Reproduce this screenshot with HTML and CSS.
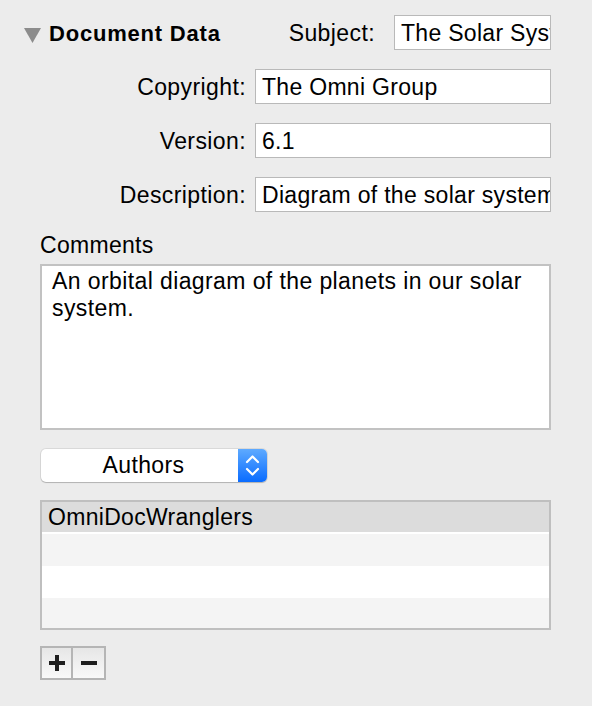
FILE: index.html
```html
<!DOCTYPE html>
<html>
<head>
<meta charset="utf-8">
<link rel="stylesheet" href="styles.css">
</head>
<body>
<div class="panel">
  <div class="head">
    <svg class="disclosure" width="17" height="16" viewBox="0 0 17 16"><polygon points="0,0 17,0 8.5,15" fill="#8c8c8c"/></svg>
    <span class="title">Document Data</span>
    <div class="subject">
      <span class="label">Subject:</span>
      <div class="input small">The Solar System</div>
    </div>
  </div>
  <div class="field">
    <span class="label">Copyright:</span>
    <div class="input">The Omni Group</div>
  </div>
  <div class="field">
    <span class="label">Version:</span>
    <div class="input">6.1</div>
  </div>
  <div class="field">
    <span class="label">Description:</span>
    <div class="input">Diagram of the solar system</div>
  </div>
  <div class="comments-label">Comments</div>
  <div class="textarea">An orbital diagram of the planets in our solar system.</div>
  <div class="popup">
    <span class="popup-text">Authors</span>
    <span class="popup-arrows">
      <svg width="29" height="33" viewBox="0 0 29 33"><path d="M9 13 L14.5 7.5 L20 13 M9 20 L14.5 25.5 L20 20" fill="none" stroke="#fff" stroke-width="2.2" stroke-linecap="round" stroke-linejoin="round"/></svg>
    </span>
  </div>
  <div class="table">
    <div class="row selected">OmniDocWranglers</div>
    <div class="row alt"></div>
    <div class="row"></div>
    <div class="row alt last"></div>
  </div>
  <div class="buttons">
    <div class="btn">
      <svg width="16" height="16" viewBox="0 0 16 16"><path d="M0 8 H16 M8 0 V16" stroke="#1e1e1e" stroke-width="4"/></svg>
    </div>
    <div class="btn">
      <svg width="16" height="16" viewBox="0 0 16 16"><path d="M0 8 H16" stroke="#1e1e1e" stroke-width="4"/></svg>
    </div>
  </div>
</div>
</body>
</html>
```
FILE: styles.css
```css
html, body {
  margin: 0;
  padding: 0;
  background: #ececec;
}
body {
  font-family: "Liberation Sans", Arial, sans-serif;
  font-size: 23px;
  color: #000;
  width: 592px;
  height: 706px;
  overflow: hidden;
}
.panel {
  padding: 15px 41px 0 40px;
}
.head {
  display: flex;
  align-items: baseline;
  height: 35px;
  margin-left: -16px;
}
.disclosure {
  display: block;
  align-self: flex-start;
  margin-right: 8px;
  margin-top: 13px;
}
.title {
  font-weight: bold;
  font-size: 22px;
  letter-spacing: 0.8px;
}
.subject {
  margin-left: auto;
  display: flex;
  align-items: baseline;
  gap: 19px;
}
.label {
  letter-spacing: 0.4px;
}
.input {
  box-sizing: border-box;
  width: 296px;
  height: 35px;
  background: #fff;
  border: 1px solid #b9b9b9;
  padding: 2px 6px 0;
  line-height: 31px;
  white-space: nowrap;
  overflow: hidden;
  letter-spacing: 0.3px;
}
.input.small {
  width: 157px;
}
.field {
  display: flex;
  justify-content: flex-end;
  align-items: baseline;
  gap: 9px;
  margin-top: 19px;
}
.comments-label {
  margin-top: 20px;
  line-height: 26px;
  letter-spacing: 0.3px;
}
.textarea {
  box-sizing: border-box;
  margin-top: 6px;
  height: 166px;
  background: #fff;
  border: 2px solid #c2c2c2;
  padding: 2px 10px;
  line-height: 27px;
  letter-spacing: 0.4px;
}
.popup {
  display: flex;
  width: 226px;
  height: 33px;
  margin: 19px 0 0 1px;
  border-radius: 5px;
  background: #fff;
  box-shadow: 0 0 0 1px rgba(0,0,0,0.08), 0 1px 1px rgba(0,0,0,0.18);
  overflow: hidden;
}
.popup-text {
  flex: 1;
  text-align: center;
  line-height: 33px;
  padding-left: 8px;
  letter-spacing: 0.4px;
}
.popup-arrows {
  width: 29px;
  height: 33px;
  background: linear-gradient(#5eaaff, #0a6cff);
}
.popup-arrows svg {
  display: block;
}
.table {
  margin-top: 18px;
  border: 2px solid #bfbfbf;
  background: #fff;
}
.row {
  height: 32px;
  box-sizing: border-box;
  background: #fff;
}
.row.alt {
  background: #f4f4f4;
}
.row.selected {
  background: #dcdcdc;
  border-bottom: 2px solid #fff;
  line-height: 29px;
  padding: 1px 0 0 6px;
  letter-spacing: 0.3px;
}
.row.last {
  height: 30px;
}
.buttons {
  display: flex;
  margin-top: 16px;
}
.btn {
  box-sizing: border-box;
  width: 33px;
  height: 34px;
  border: 2px solid #b5b5b5;
  background: linear-gradient(#e6e6e6, #f9f9f9);
  display: flex;
  align-items: center;
  justify-content: center;
}
.btn + .btn {
  border-left: none;
  width: 33px;
}
.btn svg {
  display: block;
}
```
